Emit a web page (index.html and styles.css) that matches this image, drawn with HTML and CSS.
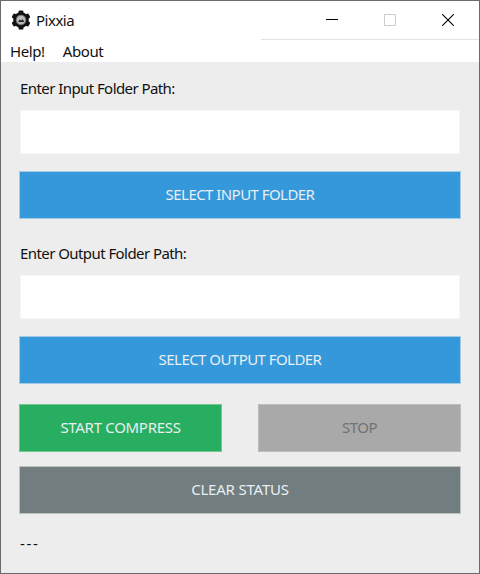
FILE: index.html
```html
<!DOCTYPE html>
<html lang="en">
<head>
  <meta charset="UTF-8">
  <meta name="viewport" content="width=device-width, initial-scale=1.0">
  <title>Pixxia</title>
  <link rel="stylesheet" href="styles.css">
</head>
<body>
  <div class="window">
    <!-- Title bar -->
    <header class="titlebar">
      <svg class="logo" width="22" height="22" viewBox="0 0 22 22">
        <g fill="#111">
          <circle cx="11" cy="11" r="7.8"/>
          <rect x="8.6" y="1.4" width="4.8" height="19.2" rx="1.2"/>
          <rect x="8.6" y="1.4" width="4.8" height="19.2" rx="1.2" transform="rotate(60 11 11)"/>
          <rect x="8.6" y="1.4" width="4.8" height="19.2" rx="1.2" transform="rotate(120 11 11)"/>
        </g>
        <circle cx="11" cy="11" r="4.8" fill="#bbb" stroke="#777"/>
        <path d="M8 13l1.8-2.4 1.4 1.1 1.4-1.6 1.6 2.9z" fill="#222"/>
      </svg>
      <span class="title">Pixxia</span>
      <div class="controls">
        <svg width="12" height="12" viewBox="0 0 12 12"><path d="M0 5.5h12" stroke="#000"/></svg>
        <svg width="12" height="12" viewBox="0 0 12 12"><path d="M.5.5h11v11H.5z" fill="none" stroke="#ccc"/></svg>
        <svg width="12" height="12" viewBox="0 0 12 12"><path d="M.3.3l11.4 11.4M11.7.3L.3 11.7" stroke="#000" stroke-width="1.1"/></svg>
      </div>
    </header>

    <!-- Menu -->
    <nav class="menu">
      <span>Help!</span>
      <span>About</span>
    </nav>

    <!-- Form -->
    <main class="content">
      <label class="label" for="input">Enter Input Folder Path:</label>
      <input type="text" id="input" class="field">
      <button class="blue">SELECT INPUT FOLDER</button>

      <label class="label second" for="output">Enter Output Folder Path:</label>
      <input type="text" id="output" class="field">
      <button class="blue">SELECT OUTPUT FOLDER</button>

      <div class="actions">
        <button class="green">START COMPRESS</button>
        <button class="stop" disabled>STOP</button>
      </div>
      <button class="clear">CLEAR STATUS</button>
      <div class="status">---</div>
    </main>
  </div>
</body>
</html>
```
FILE: styles.css
```css
* {
  box-sizing: border-box;
}

body {
  margin: 0;
  font-family: "Noto Sans", "Open Sans", sans-serif;
  font-size: 15px;
  color: #111;
}

.window {
  width: 480px;
  height: 574px;
  border: 1px solid #6b6b6b;
  background-color: #fff;
  display: flex;
  flex-direction: column;
}

.titlebar {
  height: 38px;
  display: flex;
  align-items: center;
  padding-left: 9px;
  flex-shrink: 0;
}

.title {
  margin: 0 0 1px 4px;
  letter-spacing: -0.5px;
}

.controls {
  width: 218px;
  height: 39px;
  margin-left: auto;
  align-self: flex-start;
  border-bottom: 1px solid #e2e2e2;
  display: flex;
  gap: 46px;
  padding: 13px 0 0 65px;
}

.menu {
  height: 23px;
  display: flex;
  align-items: center;
  gap: 18px;
  padding: 1px 0 0 9px;
  letter-spacing: -0.4px;
  flex-shrink: 0;
}

.content {
  flex: 1;
  display: flex;
  flex-direction: column;
  padding: 16px 18px 0;
  background-color: #ededed;
}

.label {
  height: 22px;
  line-height: 20px;
  margin: 0 0 10px 1px;
  letter-spacing: -0.57px;
}

.second {
  margin-top: 24px;
}

.field {
  height: 44px;
  margin: 0 1px 17px;
  border: 1px solid #f7f7f7;
  background-color: #fff;
  padding: 0 8px;
  font: inherit;
}

button {
  height: 48px;
  padding: 0 0 2px;
  border: 1px solid;
  border-radius: 0;
  font: inherit;
  color: #e8eef2;
}

.blue {
  background-color: #3498db;
  border-color: #a5cbe6;
  letter-spacing: -0.55px;
}

.actions {
  display: flex;
  justify-content: space-between;
  margin: 20px 0 14px;
}

.green {
  width: 203px;
  background-color: #27ae60;
  border-color: #73c596;
  letter-spacing: -0.3px;
}

.stop {
  width: 203px;
  background-color: #a9a9a9;
  border-color: #bdbdbd;
  color: #727272;
  letter-spacing: -0.5px;
}

.clear {
  background-color: #717d7e;
  border-color: #bcc1c1;
  letter-spacing: -0.2px;
}

.status {
  margin: 20px 0 0 1px;
  line-height: 18px;
  letter-spacing: 1.7px;
}
```
